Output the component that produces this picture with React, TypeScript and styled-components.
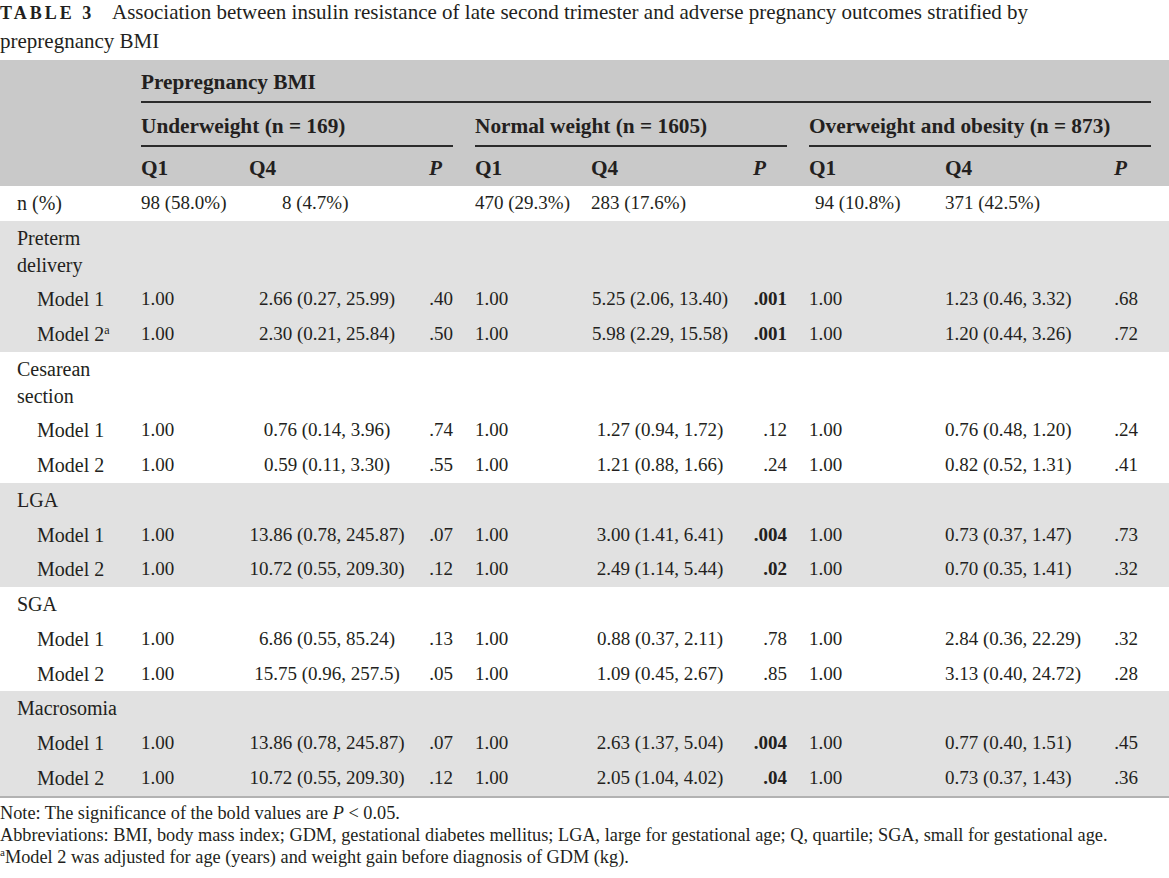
import React from "react";
import styled, { createGlobalStyle } from "styled-components";

const GlobalStyle = createGlobalStyle`
  body {
    margin: 0;
    background: #ffffff;
  }
`;

// label, UW(Q1,Q4,P), gap, NW(Q1,Q4,P), gap, OW(Q1,Q4,P), pad, pad
const COLS = [141, 108, 156, 48, 22, 116, 138, 58, 22, 136, 124, 69, 13, 18];

type Group = [string, string, string, boolean?];
type ModelRow = { label: string; sup?: string; groups: Group[] };
type Section = { title: string[]; shade: boolean; rows: ModelRow[] };

const sections: Section[] = [
  {
    title: ["Preterm", "delivery"],
    shade: true,
    rows: [
      { label: "Model 1", groups: [["1.00", "2.66 (0.27, 25.99)", ".40"], ["1.00", "5.25 (2.06, 13.40)", ".001", true], ["1.00", "1.23 (0.46, 3.32)", ".68"]] },
      { label: "Model 2", sup: "a", groups: [["1.00", "2.30 (0.21, 25.84)", ".50"], ["1.00", "5.98 (2.29, 15.58)", ".001", true], ["1.00", "1.20 (0.44, 3.26)", ".72"]] },
    ],
  },
  {
    title: ["Cesarean", "section"],
    shade: false,
    rows: [
      { label: "Model 1", groups: [["1.00", "0.76 (0.14, 3.96)", ".74"], ["1.00", "1.27 (0.94, 1.72)", ".12"], ["1.00", "0.76 (0.48, 1.20)", ".24"]] },
      { label: "Model 2", groups: [["1.00", "0.59 (0.11, 3.30)", ".55"], ["1.00", "1.21 (0.88, 1.66)", ".24"], ["1.00", "0.82 (0.52, 1.31)", ".41"]] },
    ],
  },
  {
    title: ["LGA"],
    shade: true,
    rows: [
      { label: "Model 1", groups: [["1.00", "13.86 (0.78, 245.87)", ".07"], ["1.00", "3.00 (1.41, 6.41)", ".004", true], ["1.00", "0.73 (0.37, 1.47)", ".73"]] },
      { label: "Model 2", groups: [["1.00", "10.72 (0.55, 209.30)", ".12"], ["1.00", "2.49 (1.14, 5.44)", ".02", true], ["1.00", "0.70 (0.35, 1.41)", ".32"]] },
    ],
  },
  {
    title: ["SGA"],
    shade: false,
    rows: [
      { label: "Model 1", groups: [["1.00", "6.86 (0.55, 85.24)", ".13"], ["1.00", "0.88 (0.37, 2.11)", ".78"], ["1.00", "2.84 (0.36, 22.29)", ".32"]] },
      { label: "Model 2", groups: [["1.00", "15.75 (0.96, 257.5)", ".05"], ["1.00", "1.09 (0.45, 2.67)", ".85"], ["1.00", "3.13 (0.40, 24.72)", ".28"]] },
    ],
  },
  {
    title: ["Macrosomia"],
    shade: true,
    rows: [
      { label: "Model 1", groups: [["1.00", "13.86 (0.78, 245.87)", ".07"], ["1.00", "2.63 (1.37, 5.04)", ".004", true], ["1.00", "0.77 (0.40, 1.51)", ".45"]] },
      { label: "Model 2", groups: [["1.00", "10.72 (0.55, 209.30)", ".12"], ["1.00", "2.05 (1.04, 4.02)", ".04", true], ["1.00", "0.73 (0.37, 1.43)", ".36"]] },
    ],
  },
];

// right padding of the italic P heading in each group
const pHeadPad = [11, 21, 11];

export default function App() {
  return (
    <Page>
      <GlobalStyle />
      <Caption>
        <CaptionTag>TABLE 3</CaptionTag>
        Association between insulin resistance of late second trimester and adverse pregnancy outcomes stratified by
        <br />
        prepregnancy BMI
      </Caption>

      <Table>
        <colgroup>
          {COLS.map((w, i) => (
            <col key={i} style={{ width: w }} />
          ))}
        </colgroup>
        <thead>
          <HeadRow $pt={9} $pb={5}>
            <HeadCell rowSpan={3} />
            <RuledHead colSpan={12}>Prepregnancy BMI</RuledHead>
            <HeadCell />
          </HeadRow>
          <HeadRow $pt={10} $pb={5}>
            <RuledHead colSpan={3}>Underweight (n = 169)</RuledHead>
            <HeadCell />
            <RuledHead colSpan={3}>Normal weight (n = 1605)</RuledHead>
            <HeadCell />
            <RuledHead colSpan={4}>Overweight and obesity (n = 873)</RuledHead>
            <HeadCell />
          </HeadRow>
          <HeadRow $pt={8} $pb={4}>
            {pHeadPad.map((pad, i) => (
              <React.Fragment key={i}>
                <HeadCell>Q1</HeadCell>
                <HeadCell>Q4</HeadCell>
                <PHead $pad={pad}>P</PHead>
                {i < 2 && <HeadCell />}
              </React.Fragment>
            ))}
            <HeadCell />
            <HeadCell />
          </HeadRow>
        </thead>

        <tbody>
          <BodyRow $shade={false}>
            <Label>n (%)</Label>
            <Num>98 (58.0%)</Num>
            <Num $pad={33}>8 (4.7%)</Num>
            <Cell />
            <Cell />
            <Num>470 (29.3%)</Num>
            <Num>283 (17.6%)</Num>
            <Cell />
            <Cell />
            <Num $pad={6}>94 (10.8%)</Num>
            <Num>371 (42.5%)</Num>
            <Cell />
            <Cell />
            <Cell />
          </BodyRow>
        </tbody>

        {sections.map((s) => (
          <tbody key={s.title.join(" ")}>
            <BodyRow $shade={s.shade}>
              <Label>
                {s.title.map((t, i) => (
                  <React.Fragment key={t}>
                    {i > 0 && <br />}
                    {t}
                  </React.Fragment>
                ))}
              </Label>
              <Cell colSpan={13} />
            </BodyRow>
            {s.rows.map((r) => (
              <BodyRow key={r.label} $shade={s.shade}>
                <Label $indent>
                  {r.label}
                  {r.sup && <Sup>{r.sup}</Sup>}
                </Label>
                {r.groups.map(([q1, q4, p, bold], i) => (
                  <React.Fragment key={i}>
                    <Num>{q1}</Num>
                    <Ci>{q4}</Ci>
                    <PVal $bold={!!bold}>{p}</PVal>
                    {i < 2 && <Cell />}
                  </React.Fragment>
                ))}
                <Cell />
                <Cell />
              </BodyRow>
            ))}
          </tbody>
        ))}
      </Table>

      <Notes>
        <NoteLine>
          Note: The significance of the bold values are <i>P</i> &lt; 0.05.
        </NoteLine>
        <NoteLine>
          Abbreviations: BMI, body mass index; GDM, gestational diabetes mellitus; LGA, large for gestational age; Q,
          quartile; SGA, small for gestational age.
        </NoteLine>
        <NoteLine>
          <Sup>a</Sup>Model 2 was adjusted for age (years) and weight gain before diagnosis of GDM (kg).
        </NoteLine>
      </Notes>
    </Page>
  );
}

const Page = styled.div`
  width: 1169px;
  font-family: "Liberation Serif", "Times New Roman", serif;
  color: #231f20;
`;

const Caption = styled.div`
  margin-top: -2px;
  margin-bottom: 5px;
  font-size: 21px;
  line-height: 28px;
  white-space: nowrap;
`;

const CaptionTag = styled.span`
  display: inline-block;
  width: 112px;
  font-size: 18px;
  font-weight: 700;
  letter-spacing: 3px;
`;

const Table = styled.table`
  width: 1169px;
  table-layout: fixed;
  border-collapse: separate;
  border-spacing: 0;
  font-size: 19px;

  tbody:last-of-type tr:last-child td {
    border-bottom: 2px solid #b2b2b2;
  }
`;

const HeadRow = styled.tr<{ $pt: number; $pb: number }>`
  background: #c9c9c9;

  th {
    padding-top: ${(p) => p.$pt}px;
    padding-bottom: ${(p) => p.$pb}px;
  }
`;

const HeadCell = styled.th`
  padding-left: 0;
  padding-right: 0;
  text-align: left;
  font-size: 21.3px;
  font-weight: 700;
  line-height: 27px;
  white-space: nowrap;
`;

const RuledHead = styled(HeadCell)`
  border-bottom: 2px solid #2b2b2b;
`;

const PHead = styled(HeadCell)<{ $pad: number }>`
  text-align: right;
  font-style: italic;
  padding-right: ${(p) => p.$pad}px !important;
`;

const BodyRow = styled.tr<{ $shade: boolean }>`
  background: ${(p) => (p.$shade ? "#e1e1e1" : "#ffffff")};
`;

const Cell = styled.td`
  padding: 4px 0;
  line-height: 26.75px;
  vertical-align: top;
  white-space: nowrap;
`;

const Label = styled(Cell)<{ $indent?: boolean }>`
  padding-left: ${(p) => (p.$indent ? 37 : 17)}px;
  font-size: 20px;
`;

const Num = styled(Cell)<{ $pad?: number }>`
  padding-left: ${(p) => p.$pad ?? 0}px;
  text-align: left;
`;

const Ci = styled(Cell)`
  text-align: center;
`;

const PVal = styled(Cell)<{ $bold: boolean }>`
  text-align: right;
  font-weight: ${(p) => (p.$bold ? 700 : 400)};
`;

const Sup = styled.sup`
  font-size: 0.6em;
  line-height: 0;
  vertical-align: 0.6em;
`;

const Notes = styled.div`
  margin-top: 4px;
  font-size: 18.3px;
  line-height: 22px;
`;

const NoteLine = styled.div`
  white-space: nowrap;
`;
